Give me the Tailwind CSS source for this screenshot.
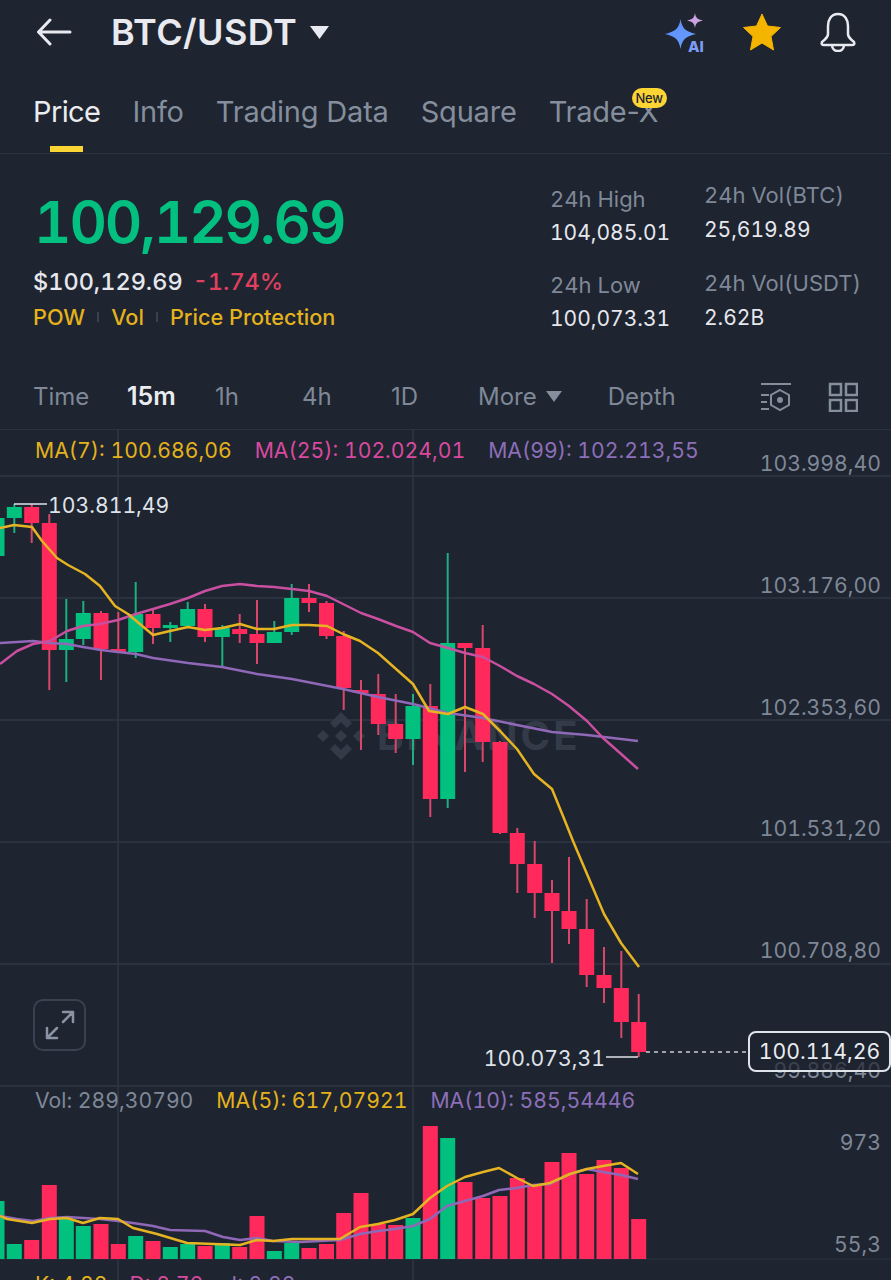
<!DOCTYPE html>
<html lang="en">
<head>
  <meta charset="UTF-8"/>
  <meta name="viewport" content="width=device-width,initial-scale=1.0"/>
  <title>BTC/USDT</title>
  <script src="https://cdn.jsdelivr.net/npm/@tailwindcss/browser@4"></script>
</head>
<body class="bg-[#1e2430] [font-family:Inter,sans-serif] tabular-nums">
<div class="w-[891px] h-[1280px] overflow-hidden flex flex-col">

  <!-- Top bar -->
  <div class="h-[64px] flex items-center pl-[36px] pr-[34px] shrink-0">
    <svg width="36" height="28" viewBox="0 0 36 28" fill="none" stroke="#e8eaf0" stroke-width="3" stroke-linecap="round" stroke-linejoin="round"><path d="M34 14H3M14 2L2.500 14L14 26"/></svg>
    <span class="ml-[39px] text-[36px] font-semibold text-[#e8eaf0] tracking-[0.4px]">BTC/USDT</span>
    <svg class="ml-[13px]" width="19" height="13" viewBox="0 0 19 13"><path d="M0 0H19L9.500 13Z" fill="#e8eaf0"/></svg>
    <div class="ml-auto flex items-center">
      <svg class="overflow-visible" width="44" height="42" viewBox="0 0 44 42">
        <defs><linearGradient id="ai" x1="0" y1="0" x2="1" y2="1"><stop offset="0" stop-color="#5b8cff"/><stop offset="1" stop-color="#6aa0f8"/></linearGradient></defs>
        <path d="M15.500 8C17 17 20 20.500 31 23C20 25.500 17 29 15.500 38C14 29 11 25.500 0 23C11 20.500 14 17 15.500 8Z" fill="url(#ai)"/>
        <path d="M30 2C30.800 7 32.500 8.500 38 9.500C32.500 10.500 30.800 12 30 17C29.200 12 27.500 10.500 22 9.500C27.500 8.500 29.200 7 30 2Z" fill="#cda2e0"/>
        <text x="23" y="41" font-size="15" font-weight="800" fill="#7d9cf5">AI</text>
      </svg>
      <svg class="ml-[33px]" width="40" height="38" viewBox="0 0 40 38"><path d="M20 1L25.500 13L38.500 14.500L29 23.500L31.500 37L20 30L8.500 37L11 23.500L1.500 14.500L14.500 13Z" fill="#f5b400" stroke="#f5b400" stroke-linejoin="round" stroke-width="1"/></svg>
      <svg class="ml-[37px]" width="38" height="40" viewBox="0 0 38 40" fill="none" stroke="#e8eaf0" stroke-width="2.500" stroke-linejoin="round"><path d="M19 2C12 2 9 8 9 14V22C9 26 6 27 3 30C2 32 3 33 5 33H33C35 33 36 32 35 30C32 27 29 26 29 22V14C29 8 26 2 19 2Z"/><path d="M13 33C13 37 16 39 19 39C22 39 25 37 25 33"/></svg>
    </div>
  </div>

  <!-- Tabs -->
  <div class="relative h-[90px] shrink-0 border-b border-[#2b3240] flex items-start pt-[29px] pl-[33px] gap-[32px] text-[29px] leading-[38px] text-[#848e9c] tracking-[-0.2px] normal-nums">
    <div class="relative text-[#eaecef] tracking-[-0.6px]">Price<div class="absolute left-[17px] top-[53px] w-[33px] h-[6px] bg-[#fcd535]"></div></div>
    <div>Info</div>
    <div>Trading Data</div>
    <div>Square</div>
    <div class="relative">Trade-X
      <div class="absolute left-[83px] top-[-5px] w-[35px] h-[20px] rounded-full bg-[#fcd535] text-[#1e2430] text-[13px] leading-[20px] text-center font-medium">New</div>
    </div>
  </div>

  <!-- Price stats -->
  <div class="h-[216px] shrink-0 flex pl-[36px] relative">
    <div class="w-[514px] shrink-0">
      <div class="-ml-[2px] mt-[30px] text-[58px] leading-[76px] font-semibold text-[#03bf80] tracking-[-2.1px]">100,129.69</div>
      <div class="-ml-[3px] mt-[6px] flex items-center text-[23.5px] leading-[32px] font-medium">
        <span class="text-[#e6e8ee]">$100,129.69</span>
        <span class="ml-[10px] text-[#e0405f]">-1.74%</span>
      </div>
      <div class="-ml-[3px] mt-[4px] flex items-center text-[21.7px] leading-[30px] font-medium text-[#e3b21c]">
        <span>POW</span><span class="mx-[12px] w-[2px] h-[10px] bg-[#3a4150]"></span>
        <span>Vol</span><span class="mx-[12px] w-[2px] h-[10px] bg-[#3a4150]"></span>
        <span>Price Protection</span>
      </div>
    </div>
    <div class="w-[154px] shrink-0 pt-[30px] text-[22px] leading-[30px]">
      <div class="text-[#7f8897]">24h High</div>
      <div class="mt-[4px] text-[21px] text-[#e6e8ee]">104,085.01</div>
      <div class="mt-[22px] text-[#7f8897]">24h Low</div>
      <div class="mt-[4px] text-[21px] text-[#e6e8ee]">100,073.31</div>
    </div>
    <div class="pt-[26px] text-[22px] leading-[30px]">
      <div class="text-[#7f8897]">24h Vol(BTC)</div>
      <div class="mt-[5px] text-[21px] text-[#e6e8ee]">25,619.89</div>
      <div class="mt-[23px] text-[#7f8897]">24h Vol(USDT)</div>
      <div class="mt-[5px] text-[21px] text-[#e6e8ee]">2.62B</div>
    </div>
  </div>

  <!-- Interval selector -->
  <div class="h-[60px] shrink-0 border-b border-[#2b3240] flex items-center text-[24px] text-[#7f8897] relative pl-[33px] pb-[6px] normal-nums">
    <span class="w-[94px]">Time</span>
    <span class="w-[88px] text-[25px] text-[#eaecef] font-semibold">15m</span>
    <span class="w-[87px]">1h</span>
    <span class="w-[89px]">4h</span>
    <span class="w-[87px]">1D</span>
    <span>More</span>
    <svg class="ml-[9px]" width="16" height="11" viewBox="0 0 16 11"><path d="M0 0H16L8 11Z" fill="#848e9c"/></svg>
    <span class="ml-[46px]">Depth</span>
    <svg class="ml-auto" width="32" height="30" viewBox="0 0 32 30" fill="none" stroke="#848e9c" stroke-width="2"><path d="M1 2H31M1 13H9M1 20H7M1 27H9"/><path d="M20 8L29 13V23L20 28L11 23V13Z"/><circle cx="20" cy="18" r="2" fill="#848e9c"/></svg>
    <svg class="ml-[36px] mr-[33px]" width="30" height="30" viewBox="0 0 30 30" fill="none" stroke="#848e9c" stroke-width="2.500"><rect x="2" y="2" width="11" height="11"/><rect x="18" y="2" width="11" height="11"/><rect x="2" y="18" width="11" height="11"/><rect x="18" y="18" width="11" height="11"/></svg>
  </div>

  <div class="relative flex-1">
    <svg id="chart" class="absolute inset-0" width="891" height="851" viewBox="0 429 891 851"></svg>
    <div class="absolute left-[35px] top-[5px] flex gap-[23px] text-[21.2px] leading-[30px]">
      <span class="text-[#e3b21c]">MA(7): 100.686,06</span>
      <span class="text-[#d84a9e]">MA(25): 102.024,01</span>
      <span class="text-[#8c6fb8]">MA(99): 102.213,55</span>
    </div>
    <div class="absolute left-[35px] top-[655px] flex gap-[23px] text-[21.2px] leading-[30px]">
      <span class="text-[#7f8897]">Vol: 289,30790</span>
      <span class="text-[#e3b21c]">MA(5): 617,07921</span>
      <span class="text-[#8c6fb8]">MA(10): 585,54446</span>
    </div>
    <div class="absolute left-[35px] top-[839px] flex gap-[22px] text-[21.2px] leading-[30px]">
      <span class="text-[#e3b21c]">K: 4,88</span>
      <span class="text-[#d84a9e]">D: 8,76</span>
      <span class="text-[#8c6fb8]">J: 2,88</span>
    </div>
    <div class="absolute left-[33px] top-[569px] w-[53px] h-[52px] rounded-[10px] border-2 border-[#3a4150] flex items-center justify-center">
      <svg width="32" height="32" viewBox="0 0 32 32" fill="none" stroke="#8a93a3" stroke-width="2.500" stroke-linecap="round" stroke-linejoin="round"><path d="M3 29L13 19M3 19V29H13M29 3L19 13M19 3H29V13"/></svg>
    </div>
    <div class="absolute left-[748px] top-[601px] w-[143px] h-[41px] rounded-[8px] border-2 border-[#dfe3ea] bg-[#1e2430]/70 flex items-center justify-center text-[21.2px] text-[#eaecef]">100.114,26</div>
  </div>
</div>

<script>
  const up = '#02c17e', down = '#ff2a5b';
  // x, wick top, wick bottom, body top, body bottom, green?
  const candles = [
    [-3,510,556,517,555,1],[14.3,503,532,506,517,1],[31.7,503,542,506,522,0],[49.3,513,689,522,649,0],
    [66.3,598,681,638,649,1],[83.3,600,644,612,638,1],[101,610,679,612,648,0],[118.3,611,652,648,651,0],
    [135.7,581,657,613,651,1],[153,608,643,613,627,0],[170.3,621,641,624,627,1],[187.7,601,627,608,625,1],
    [205,603,641,608,636,0],[222.3,624,666,627,636,1],[239.7,613,642,628,633,0],[257,599,663,633,642,0],
    [274.3,620,642,631,642,1],[291.7,583,634,597,631,1],[309,583,611,597,602,0],[326.5,600,638,602,635,0],
    [343.7,630,709,635,687,0],[361,679,749,689,692,0],[378.3,673,734,693,723,0],[395.7,693,752,723,738,0],
    [413,693,764,705,738,1],[430.3,683,816,705,798,0],[447.7,552,807,642,798,1],[465,642,771,642,647,0],
    [482.7,624,761,647,741,0],[500,740,833,741,832,0],[517.3,827,892,832,863,0],[534.7,840,917,863,892,0],
    [552,879,962,892,910,0],[569,856,943,910,928,0],[586.7,898,986,928,974,0],[604,946,1002,974,987,0],
    [621.3,950,1037,987,1021,0],[638.7,993,1056,1021,1051,0]
  ];
  const volTops = [1200,1243,1239,1184,1218,1225,1223,1243,1235,1240,1246,1243,1245,1242,1246,1215,1250,1242,1247,1243,
    1212,1192,1223,1224,1217,1125,1137,1181,1197,1195,1177,1185,1161,1152,1173,1159,1167,1218];

  const ma7 = '0,527 14,524 32,526 42,540 57,557 68,564 85,573 100,585 115,605 128,613 153,634 170,630 188,626 205,629 222,627 240,623 257,628 274,628 292,624 309,624 327,625 343,633 360,640 378,652 396,668 413,683 429,710 448,713 465,706 483,713 500,730 517,748 534,773 552,788 565,820 573,840 587,873 604,913 621,942 639,966';
  const ma25 = '0,663 17,650 33,643 50,640 67,630 83,625 100,623 118,619 136,613 153,608 170,603 188,597 205,590 222,585 240,583 257,585 274,586 292,588 309,590 327,595 343,603 361,612 378,618 396,625 413,631 430,642 448,647 465,652 483,656 500,665 517,675 534,683 552,693 569,705 587,720 603,737 620,752 638,768';
  const ma99 = '0,642 17,641 33,640 50,642 67,643 83,646 101,649 118,651 136,653 153,657 188,662 222,666 257,673 292,678 343,688 378,696 413,703 448,712 483,717 517,724 552,731 587,734 638,740';
  const vol5 = '0,1215 7,1218 32,1222 50,1218 67,1217 83,1222 100,1217 118,1218 133,1227 157,1233 187,1242 240,1244 257,1239 273,1240 292,1238 340,1238 360,1226 378,1223 395,1219 413,1213 430,1197 447,1185 465,1176 483,1171 499,1167 517,1177 533,1185 550,1182 570,1173 587,1168 603,1165 621,1162 638,1173';
  const vol10 = '0,1215 17,1218 33,1220 50,1217 67,1216 100,1218 118,1220 133,1222 153,1225 170,1229 205,1230 223,1236 240,1239 257,1237 273,1240 300,1241 340,1239 360,1233 378,1230 395,1228 413,1225 430,1218 447,1205 465,1200 483,1195 499,1189 517,1187 533,1184 550,1183 570,1173 587,1168 603,1171 621,1174 638,1178';

  const axis = [['103.998,40',470],['103.176,00',592],['102.353,60',714],['101.531,20',835],['100.708,80',957],['99.886,40',1077]];

  let s = '';
  // grid
  [475,597,719,841,963,1085].forEach(y => { s += `<line x1="0" x2="891" y1="${y}" y2="${y}" stroke="#2f3644" stroke-width="1.500"/>`; });
  [118,413].forEach(x => { s += `<line x1="${x}" x2="${x}" y1="429" y2="1280" stroke="#2f3644" stroke-width="1.500"/>`; });
  s += `<line x1="0" x2="891" y1="1258" y2="1258" stroke="#2b3240" stroke-width="1"/>`;

  // watermark
  s += `<g fill="#343b48" transform="translate(341,735)">
    <path d="M0 -24L11 -13L6 -8L0 -14L-6 -8L-11 -13Z"/><path d="M0 24L11 13L6 8L0 14L-6 8L-11 13Z"/>
    <path d="M-24 0L-18 -6L-12 0L-18 6Z"/><path d="M24 0L18 -6L12 0L18 6Z"/><path d="M0 -6L6 0L0 6L-6 0Z"/></g>
    <text x="377" y="749" font-size="40" font-weight="700" fill="#343b48" letter-spacing="3">BINANCE</text>`;

  // candles
  candles.forEach(([x, wt, wb, bt, bb, g]) => {
    const c = g ? up : down;
    s += `<rect x="${x - 1}" y="${wt}" width="2" height="${wb - wt}" fill="${g ? '#1fae82' : '#d8476a'}"/>`;
    s += `<rect x="${x - 7.5}" y="${bt}" width="15" height="${bb - bt}" fill="${c}"/>`;
  });
  // volume
  candles.forEach(([x, , , , , g], i) => {
    s += `<rect x="${x - 7.5}" y="${volTops[i]}" width="15" height="${1258 - volTops[i]}" fill="${g ? up : down}"/>`;
  });

  // moving averages
  [[ma99,'#8f68b8'],[ma25,'#c94fa0'],[ma7,'#e6b422'],[vol10,'#8f68b8'],[vol5,'#e6b422']].forEach(([p, c]) => {
    s += `<polyline points="${p}" fill="none" stroke="${c}" stroke-width="2.500" stroke-linejoin="round"/>`;
  });

  // price axis
  axis.forEach(([t, y]) => { s += `<text x="881" y="${y}" text-anchor="end" font-size="21.2" fill="#7f8897">${t}</text>`; });
  s += `<text x="881" y="1149" text-anchor="end" font-size="21.2" fill="#7f8897">973</text>`;
  s += `<text x="881" y="1251" text-anchor="end" font-size="21.2" fill="#7f8897">55,3</text>`;

  // high / low labels
  s += `<line x1="14" x2="47" y1="503" y2="503" stroke="#dfe3ea" stroke-width="1.500"/>`;
  s += `<text x="48" y="512" font-size="21.2" fill="#dfe3ea">103.811,49</text>`;
  s += `<line x1="606" x2="638" y1="1056" y2="1056" stroke="#dfe3ea" stroke-width="1.500"/>`;
  s += `<text x="605" y="1065" text-anchor="end" font-size="21.2" fill="#dfe3ea">100.073,31</text>`;
  // current price
  s += `<line x1="646" x2="748" y1="1051" y2="1051" stroke="#c7ccd6" stroke-width="1.500" stroke-dasharray="4 4"/>`;

  document.getElementById('chart').innerHTML = s;
</script>
</body>
</html>
